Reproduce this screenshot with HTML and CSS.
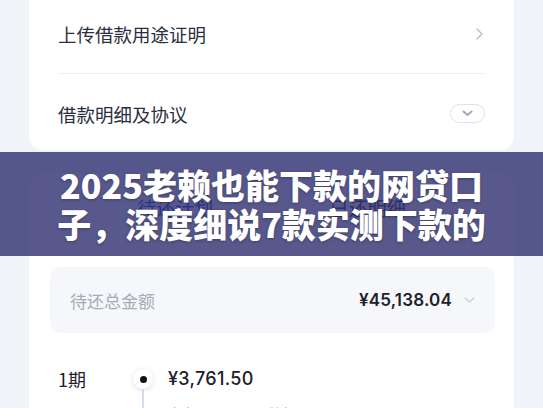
FILE: index.html
```html
<!DOCTYPE html>
<html lang="zh-CN">
<head>
    <meta charset="UTF-8">
    <meta name="viewport" content="width=device-width, initial-scale=1.0">
    <title>借款详情</title>
    <link rel="stylesheet" href="styles.css">
</head>
<body>
    <div class="page">
        <section class="card menu-card">
            <div class="menu-row divided">
                <span>上传借款用途证明</span>
                <svg class="arrow-right" width="7" height="12" viewBox="0 0 7 12"><path d="M1 1l5 5-5 5" fill="none" stroke="#b9bcc8" stroke-width="1.4" stroke-linecap="round" stroke-linejoin="round"/></svg>
            </div>
            <div class="menu-row second">
                <span>借款明细及协议</span>
                <span class="pill">
                    <svg width="11" height="7" viewBox="0 0 11 7"><path d="M1.5 1.5l4 3.5 4-3.5" fill="none" stroke="#a3a8ba" stroke-width="2" stroke-linecap="round" stroke-linejoin="round"/></svg>
                </span>
            </div>
        </section>

        <section class="card plan-card">
            <div class="tabs">
                <span class="tab active">待还计划</span>
                <span class="tab">已还明细</span>
            </div>

            <div class="total">
                <span class="total-label">待还总金额</span>
                <span class="total-value">¥45,138.04</span>
                <svg width="11" height="6" viewBox="0 0 11 6"><path d="M1 1l4.5 4 4.5-4" fill="none" stroke="#c9ccd6" stroke-width="1.3" stroke-linecap="round"/></svg>
            </div>

            <div class="period">
                <span class="period-no">1期</span>
                <div class="rail">
                    <span class="dot"></span>
                    <span class="line"></span>
                </div>
                <span class="period-amount">¥3,761.50</span>
                <span class="period-date">2024/03/20</span>
                <span class="period-detail">本金 ¥3,500.00 &nbsp;&nbsp; 利息 ¥261.50</span>
            </div>
        </section>
    </div>

    <!-- title banner laid over the page -->
    <div class="banner">
        <h1>2025老赖也能下款的网贷口子，深度细说7款实测下款的</h1>
    </div>
</body>
</html>
```

FILE: styles.css
```css
html, body {
    margin: 0;
    height: 100%;
    overflow: hidden;
}
body {
    font-family: "Noto Sans CJK SC", "Noto Sans", sans-serif;
    background: #f1f3f9;
    color: #2a2d3e;
    position: relative;
}
.page {
    padding: 0 29px;
}
.card {
    background: #fff;
    border-radius: 14px;
}

/* top menu card */
.menu-card {
    margin-top: -14px;
    padding: 0 29px;
}
.menu-row {
    display: flex;
    align-items: center;
    justify-content: space-between;
    font-size: 18.5px;
    color: #2b2e40;
}
.menu-row.divided {
    height: 88px;
    box-sizing: border-box;
    padding-top: 8px;
    border-bottom: 1px solid #eef0f4;
}
.menu-row.second {
    height: 76px;
    box-sizing: border-box;
    padding-top: 3px;
}
.arrow-right {
    margin-right: 2px;
}
.pill {
    width: 35px;
    height: 19px;
    box-sizing: border-box;
    border: 1px solid #dfe1ea;
    border-radius: 10px;
    display: flex;
    align-items: center;
    justify-content: center;
}

/* repayment plan card */
.plan-card {
    margin-top: 23px;
    padding-bottom: 40px;
}
.tabs {
    display: flex;
    height: 68px;
    padding: 0 50px;
}
.tab {
    flex: 1;
    display: flex;
    align-items: center;
    justify-content: center;
    font-size: 19px;
    color: #2f3244;
}
.tab.active {
    color: #1546d8;
}
.total {
    margin: 26px 19px 0 21px;
    height: 66px;
    padding: 0 20px;
    border-radius: 10px;
    background: #f6f7fa;
    display: flex;
    align-items: center;
    gap: 12px;
}
.total-label {
    flex: 1;
    font-size: 17px;
    color: #a8abb6;
}
.total-value {
    font-family: Inter, "Noto Sans CJK SC", sans-serif;
    font-size: 17px;
    font-weight: 600;
    color: #1e202b;
    letter-spacing: 0.2px;
}
.period {
    display: grid;
    grid-template-columns: 60px 24px 1fr;
    grid-template-rows: 24px auto;
    column-gap: 13px;
    row-gap: 12px;
    margin-top: 34px;
    padding: 0 29px;
}
.period-no {
    font-size: 18px;
    color: #1e202b;
    line-height: 24px;
}
.period-amount {
    font-family: Inter, "Noto Sans CJK SC", sans-serif;
    font-size: 18px;
    font-weight: 500;
    color: #1e202b;
    line-height: 24px;
    letter-spacing: 0.3px;
}
.period-date, .period-detail {
    font-size: 13px;
    color: #a8abb6;
}
.period-date {
    grid-column: 1;
}
.period-detail {
    grid-column: 3;
}
.rail {
    grid-column: 2;
    grid-row: 1 / span 2;
    display: flex;
    flex-direction: column;
    align-items: center;
    padding-top: 2px;
}
.dot {
    width: 20px;
    height: 20px;
    border-radius: 50%;
    background: #fff;
    box-shadow: 0 1px 5px rgba(120, 130, 160, 0.28);
    display: flex;
    align-items: center;
    justify-content: center;
}
.dot::after {
    content: "";
    width: 7px;
    height: 7px;
    border-radius: 50%;
    background: #111;
}
.line {
    width: 1.5px;
    flex: 1;
    min-height: 40px;
    background: #d4dbe9;
}

/* overlay title */
.banner {
    position: absolute;
    left: 0;
    right: 0;
    top: 152px;
    height: 104px;
    background: rgba(46, 46, 112, 0.8);
    display: flex;
    align-items: center;
    justify-content: center;
}
.banner h1 {
    margin: 0;
    width: 436px;
    text-align: center;
    font-size: 34px;
    line-height: 39px;
    font-weight: 900;
    color: #fff;
    text-shadow: 0 1px 3px rgba(0, 0, 0, 0.3);
}
```
